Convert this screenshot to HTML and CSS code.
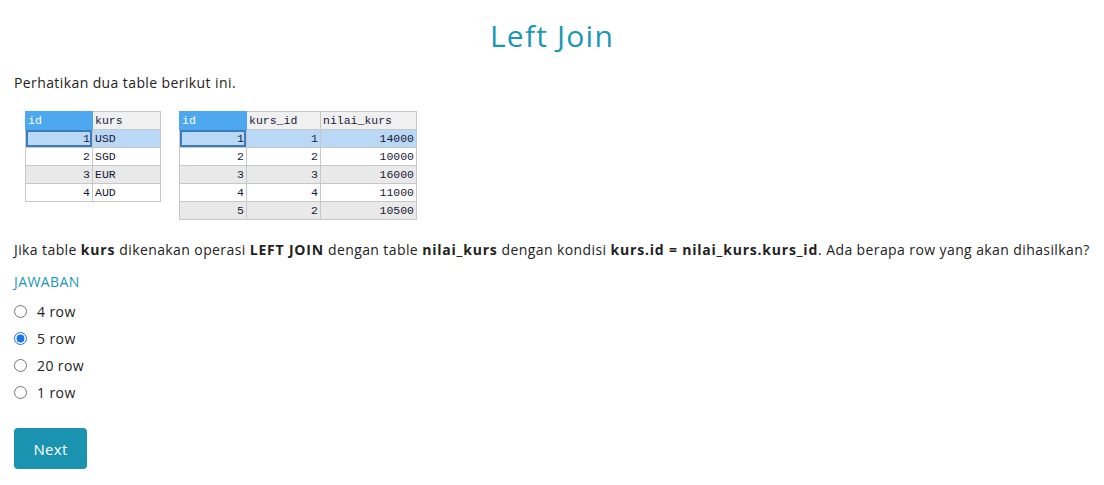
FILE: index.html
```html
<!DOCTYPE html>
<html lang="id">
<head>
<meta charset="utf-8">
<title>Left Join</title>
<link rel="stylesheet" href="styles.css">
</head>
<body>
<main class="page">
  <h1 class="title">Left Join</h1>
  <p class="intro">Perhatikan dua table berikut ini.</p>
  <div class="tables">
    <table class="grid t1">
      <colgroup><col class="c-id"><col class="c-kurs"></colgroup>
      <thead><tr><th class="key">id</th><th>kurs</th></tr></thead>
      <tbody>
        <tr class="sel"><td class="num focus">1</td><td>USD</td></tr>
        <tr><td class="num">2</td><td>SGD</td></tr>
        <tr class="alt"><td class="num">3</td><td>EUR</td></tr>
        <tr><td class="num">4</td><td>AUD</td></tr>
      </tbody>
    </table>
    <table class="grid t2">
      <colgroup><col class="c-id"><col class="c-kid"><col class="c-nilai"></colgroup>
      <thead><tr><th class="key">id</th><th>kurs_id</th><th>nilai_kurs</th></tr></thead>
      <tbody>
        <tr class="sel"><td class="num focus">1</td><td class="num">1</td><td class="num">14000</td></tr>
        <tr><td class="num">2</td><td class="num">2</td><td class="num">10000</td></tr>
        <tr class="alt"><td class="num">3</td><td class="num">3</td><td class="num">16000</td></tr>
        <tr><td class="num">4</td><td class="num">4</td><td class="num">11000</td></tr>
        <tr class="alt"><td class="num">5</td><td class="num">2</td><td class="num">10500</td></tr>
      </tbody>
    </table>
  </div>
  <p class="question">Jika table <b>kurs</b> dikenakan operasi <b>LEFT JOIN</b> dengan table <b>nilai_kurs</b> dengan kondisi <b>kurs.id = nilai_kurs.kurs_id</b>. Ada berapa row yang akan dihasilkan?</p>
  <div class="answer-label">JAWABAN</div>
  <form class="options">
    <label class="opt"><input type="radio" name="a"><span>4 row</span></label>
    <label class="opt"><input type="radio" name="a" checked><span>5 row</span></label>
    <label class="opt"><input type="radio" name="a"><span>20 row</span></label>
    <label class="opt"><input type="radio" name="a"><span>1 row</span></label>
    <button type="button" class="next">Next</button>
  </form>
</main>
</body>
</html>
```
FILE: styles.css
```css
* { box-sizing: border-box; }
html, body { margin: 0; background: #fff; }
body { font-family: "Open Sans", "Liberation Sans", sans-serif; color: #222; font-size: 14px; letter-spacing: 0.4px; }
.page { padding: 0 14px; }
.title {
  margin: 0; padding-top: 16px;
  text-align: center; font-weight: 500; font-size: 30px; line-height: 40px;
  letter-spacing: 1.2px; color: #1b97b6;
}
.intro { margin: 17px 0 0; line-height: 20px; }
.tables { display: flex; align-items: flex-start; gap: 18px; margin: 18px 0 0 11px; }
.grid {
  border-collapse: collapse; table-layout: fixed; letter-spacing: 0;
  font-family: "Liberation Mono", monospace; font-size: 11.5px; color: #1a1a3a;
  border: 1px solid #c4c4c4;
}
.grid th, .grid td {
  height: 18px; padding: 0 2px; border: 1px solid #c8c8c8;
  text-align: left; font-weight: normal; white-space: nowrap;
}
.grid th { background: #f0f0f0; }
.grid th.key { background: #4ea8f0; color: #fff; border-color: #4ea8f0; }
.grid td.num { text-align: right; }
.grid tr.alt td { background: #e9e9e9; }
.grid tr.sel td { background: #b9d8f6; }
.grid td.focus { box-shadow: inset 0 0 0 2px #3a7cc0; }
.t1 { width: 135px; }
.t1 .c-id { width: 67px; }
.t1 .c-kurs { width: 68px; }
.t2 { width: 237px; }
.t2 .c-id { width: 67px; }
.t2 .c-kid { width: 74px; }
.t2 .c-nilai { width: 96px; }
.question { margin: 20px 0 0; line-height: 20px; }
.question b { font-weight: 700; letter-spacing: 0.8px; }
.answer-label { margin-top: 12px; color: #1b97b6; line-height: 20px; }
.options { display: flex; flex-direction: column; align-items: flex-start; margin-top: 6px; }
.opt { display: flex; align-items: center; height: 27px; gap: 10px; }
.opt input { margin: 0; width: 13px; height: 13px; accent-color: #1a73e8; }
.next {
  margin-top: 22px; width: 73px; height: 41px;
  background: #1a93b1; color: #fff; border: 0; border-radius: 4px;
  font-family: inherit; font-size: 15px; font-weight: 500; letter-spacing: 0.3px;
}
```
